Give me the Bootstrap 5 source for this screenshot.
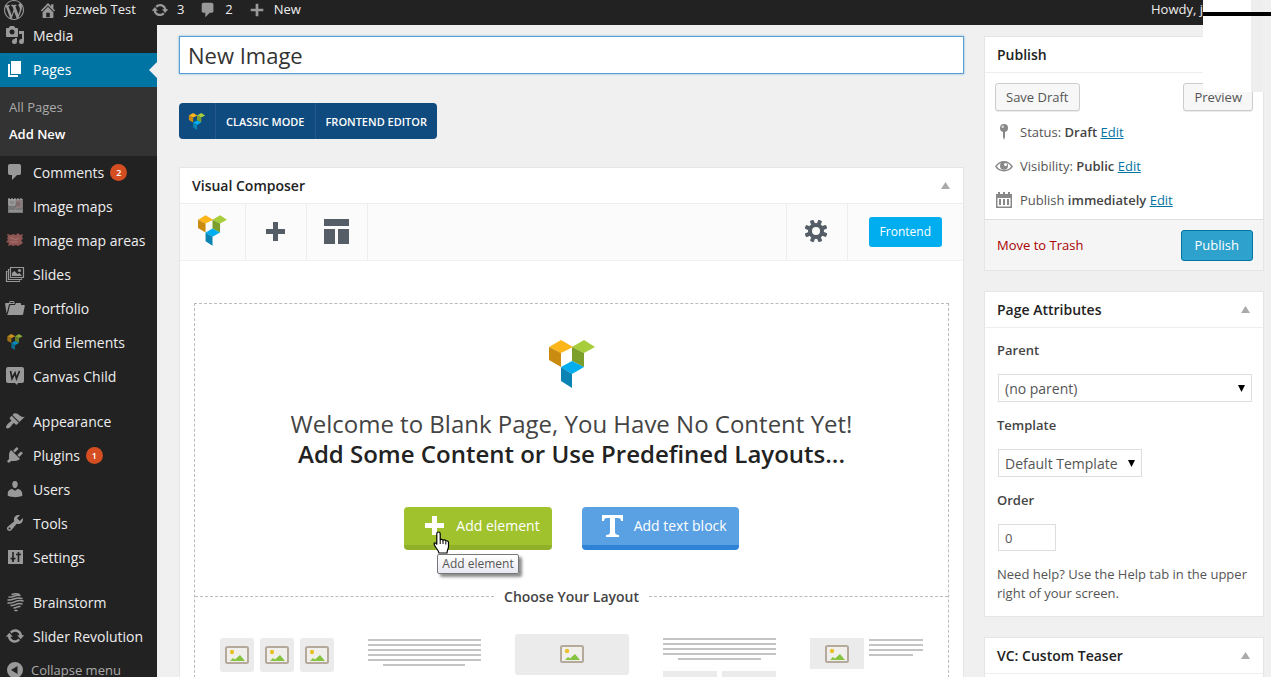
<!DOCTYPE html>
<html lang="en">
<head>
<meta charset="utf-8">
<meta name="viewport" content="width=device-width, initial-scale=1">
<title>Add New Page</title>
<link rel="stylesheet" href="https://cdn.jsdelivr.net/npm/bootstrap@5.3.0/dist/css/bootstrap.min.css">
<style>
body{font-family:"Open Sans",sans-serif;font-size:13px;line-height:19px;color:#555;background:#f0f0f0}
svg{display:block;flex:none}
a{color:#0074a2}
.ico{width:20px;height:20px;fill:#999}
/* top bar */
.adminbar{height:25px;background:#222;color:#eee;padding:0 20px 6px 4px}
.adminbar a{color:#eee}
.adminbar .ico{width:18px;height:18px}
.adminbar .wp{width:20px;height:20px}
.adminbar .entry{padding-left:15px;gap:8px}
/* side menu */
.sidemenu{width:157px;background:#222;font-size:14px}
.sidemenu .nav-link{color:#eee;height:34px;padding:0 0 2px 5px;gap:8px;white-space:nowrap}
.sidemenu .first-item{height:28px;padding-bottom:8px}
.sidemenu .current{background:#0074a2;color:#fff;position:relative}
.sidemenu .current .ico{fill:#fff}
.sidemenu .current::after{content:"";position:absolute;right:0;top:9px;border:8px solid transparent;border-right-color:#f0f0f0;border-left:0}
.submenu{background:#333;padding:7px 0 8px 9px;font-size:13px;line-height:27px}
.submenu a{color:#aaa}
.submenu a.here{color:#fff;font-weight:600}
.split{margin-bottom:11px}
.count{width:17px;height:17px;border-radius:50%;background:#d54e21;color:#fff;font-size:9px;font-weight:600;line-height:17px;text-align:center;margin-left:-2px}
.sidemenu .collapse-btn{color:#aaa;gap:6px;font-size:13px}
/* panels */
.workarea{padding:11px 7px 0 22px;gap:20px}
.aside-col{width:280px}
.panel{background:#fff;border:1px solid #e5e5e5}
.panel-head{height:36px;padding:0 12px;border-bottom:1px solid #eee;color:#222}
.panel-head h2{font-size:14px;font-weight:600;line-height:19px;margin:0}
.tri{width:9px;height:7px;fill:#aaa}
.panel-head button{border:0;background:none;padding:0 1px}
.title-box{height:38px;border:1px solid #5b9dd9;border-radius:0;padding:0 8px;font-size:22px;color:#333;box-shadow:0 0 2px rgba(30,140,190,.6)}
.switcher{margin:29px 0 28px;height:36px;background:#0f4b7e;border-radius:4px;font-size:11px}
.switcher button{border:0;border-left:1px solid #23598a;background:none;color:#fff;padding:0 10px;height:36px;font-weight:600}
.toolbar{height:57px;background:#fbfbfb;border-bottom:1px solid #f0f0f0}
.toolbar .tool{width:61px;height:56px;border:0;border-right:1px solid #eee;background:none;padding:0 2px 2px 0}
.toolbar .tool-logo{width:66px;padding:0 0 4px}
.toolbar .tool-gear{width:62px;border-left:1px solid #eee}
.btn-front{background:#00aef0;color:#fff;font-size:12px;line-height:18px;padding:6px 11px;border:0;border-radius:3px;margin:0 21px}
.canvas{margin:42px 14px 0;border:1px dashed #bbb;border-bottom:0;padding-top:36px;height:380px}
.welcome{font-size:24px;line-height:30px;margin:21px 0 0;text-align:center;color:#444}
.welcome strong{color:#222;font-weight:600;font-size:24px}
.cta{gap:30px;margin-top:38px}
.btn-cta{height:43px;color:#fff;font-size:14px;border:0;border-bottom:5px solid;border-radius:4px;padding:0 12px 1px 20px;gap:11px}
.btn-cta:hover{color:#fff}
.green{background:#9fc22d;border-color:#90b02a}
.blue{background:#5aa1e4;border-color:#2f83d6}
.tip{position:absolute;left:33px;top:47px;white-space:nowrap;background:linear-gradient(#fff,#e8e8f2);border:1px solid #777;border-radius:2px;color:#555;font-size:12px;line-height:18px;padding:0 4px;box-shadow:3px 3px 3px rgba(0,0,0,.45)}
.pointer{position:absolute;left:29px;top:24px;z-index:2}
.choose{margin-top:37px;font-size:14px;color:#444;gap:10px;font-weight:600}
.choose span{flex:1;border-top:1px dashed #bbb}
.layouts{padding:28px 24px 0 25px}
.layouts a{display:block}
/* right column */
.btn-wp{height:28px;border:1px solid #ccc;background:#f7f7f7;color:#555;font-size:13px;line-height:26px;padding:0 10px;border-radius:3px;box-shadow:0 1px 0 rgba(0,0,0,.08)}
.btn-publish{height:31px;background:#2ea2cc;border:1px solid #0074a2;color:#fff;font-size:13px;line-height:28px;padding:0 13px;border-radius:3px}
.misc{height:34px;gap:6px;padding-left:9px}
.misc strong,.attr label{font-weight:600;color:#444}
.misc .ico{fill:#888}
.minor{padding:10px 10px 4px}
.foot{background:#f5f5f5;border-top:1px solid #ddd;height:51px;margin-top:2px;padding:0 10px 0 12px}
.foot a{color:#a00}
.attr{padding:13px 11px 13px 12px}
.attr label{display:block;margin-bottom:14px}
.attr .field{border:1px solid #ddd;border-radius:0;height:28px;font-size:14px;line-height:19px;color:#555;padding:0 6px;margin:0 0 14px 1px;width:auto}
.attr .form-select{background:#fff url("data:image/svg+xml,%3Csvg xmlns='http://www.w3.org/2000/svg' width='7' height='7'%3E%3Cpath d='M0 0h7L3.500 7z'/%3E%3C/svg%3E") no-repeat right 6px top 10px}
.attr .wide{width:calc(100% - 1px)}
.attr .tmpl{width:144px}
.attr .num{width:58px;height:27px;font-size:13px}
/* window lying over the corner of the page */
.cover{position:absolute;top:0;right:0;width:68px;height:92px;z-index:5}
.cover .white{width:48px;background:#fff}
.cover .grey{width:12px;background:#eee}
.cover .grey2{width:8px;background:#f0f0f0}
.cover .bar{position:absolute;left:0;right:0;top:12px;height:4px;background:#000}
</style>
</head>
<body class="vh-100 overflow-hidden d-flex flex-column position-relative">
<svg width="0" height="0" class="position-absolute" aria-hidden="true">
<symbol id="wp" viewBox="0 0 20 20"><path d="M20 10C20 4.490 15.510 0 10 0C4.480 0 0 4.490 0 10C0 15.520 4.480 20 10 20C15.510 20 20 15.520 20 10ZM7.780 15.370L4.370 6.220C4.920 6.200 5.540 6.130 5.540 6.130C6.040 6.070 5.980 5 5.480 5.020C5.480 5.020 4.030 5.130 3.110 5.130C2.930 5.130 2.740 5.130 2.530 5.120C4.120 2.690 6.870 1.110 10 1.110C12.330 1.110 14.450 1.980 16.050 3.450C15.370 3.340 14.400 3.840 14.400 5.020C14.400 5.760 14.850 6.380 15.300 7.120C15.650 7.740 15.860 8.500 15.860 9.620C15.860 11.130 14.440 14.690 14.440 14.690L11.380 6.220C11.930 6.200 12.220 6.050 12.220 6.050C12.720 6 12.660 4.800 12.160 4.830C12.160 4.830 10.720 4.950 9.780 4.950C8.910 4.950 7.460 4.830 7.460 4.830C6.960 4.800 6.900 6.030 7.400 6.050L8.320 6.130L9.580 9.540ZM17.410 10C17.650 9.360 18.150 8.130 17.840 5.750C18.540 7.040 18.890 8.460 18.890 10C18.890 13.290 17.160 16.240 14.490 17.780C15.460 15.190 16.430 12.580 17.410 10ZM6.100 18.090C3.120 16.650 1.110 13.530 1.110 10C1.110 8.700 1.340 7.520 1.830 6.410C3.250 10.300 4.670 14.200 6.100 18.090ZM10.130 11.460L12.710 18.440C11.850 18.730 10.950 18.890 10 18.890C9.210 18.890 8.430 18.780 7.710 18.560C8.520 16.180 9.330 13.820 10.130 11.460Z"/></symbol>
<symbol id="home" viewBox="0 0 20 20"><path fill-rule="evenodd" d="M16 8.500l2 2-1.300 1.200L10 5l-6.700 6.700L2 10.500 10 2.300l3.500 3.500V3.500H16zM10 6.500l6 6V19H4v-6.500zM12 18v-5H8v5z"/></symbol>
<symbol id="sync" viewBox="0 0 20 20"><path d="M10.200 3.280c3.530 0 6.430 2.610 6.920 6h2.080l-3.500 4-3.500-4h2.320c-.45-1.970-2.210-3.450-4.320-3.450-1.450 0-2.730.71-3.540 1.780L4.950 5.660C6.230 4.200 8.110 3.280 10.200 3.280zm-.4 13.440c-3.520 0-6.430-2.610-6.920-6H.8l3.500-4 3.500 4H5.480c.45 1.970 2.210 3.450 4.320 3.450 1.450 0 2.730-.71 3.540-1.780l1.710 1.950c-1.280 1.460-3.150 2.380-5.250 2.380z"/></symbol>
<symbol id="bubble" viewBox="0 0 20 20"><path d="M5 2h9q.82 0 1.410.59T16 4v7q0 .82-.59 1.410T14 13h-2l-5 5v-5H5q-.82 0-1.410-.59T3 11V4q0-.82.59-1.410T5 2z"/></symbol>
<symbol id="plus" viewBox="0 0 20 20"><path d="M8.500 3h3v5.500H17v3h-5.500V17h-3v-5.500H3v-3h5.500z"/></symbol>
<symbol id="media" viewBox="0 0 20 20"><path fill-rule="evenodd" d="M13 11V4c0-.55-.45-1-1-1h-1.670L9 1H5L3.670 3H2c-.55 0-1 .45-1 1v7c0 .55.45 1 1 1h10c.55 0 1-.45 1-1zM7 4.500a2.500 2.500 0 1 1 0 5 2.500 2.500 0 0 1 0-5zM14 6h5v10.500a2.500 2.500 0 1 1-2-2.450V9h-3zM10 14.050V13h2v3.500a2.500 2.500 0 1 1-2-2.450z"/></symbol>
<symbol id="pages" viewBox="0 0 20 20"><path d="M6 15V2h10v13zM5 16h8v2H3V5h2z"/></symbol>
<symbol id="imap" viewBox="0 0 20 20"><path d="M3 3h15v14H3z" fill="#777"/><path d="M4 4h6v5H4zM4 15h13" stroke="#aaa" fill="#898989"/><path d="M11 5h5v6h-4l-2 3" stroke="#a08585" fill="#7d6c6c"/><path d="M3 3h14" stroke="#bbb" stroke-dasharray="2 1"/></symbol>
<symbol id="iarea" viewBox="0 0 20 20"><path fill="#8e5553" d="M2 4l4 1 2-1 3 1 2-2 2 2 3-1-1 3 1 2-2 1 2 3-3 2-2 1-2-1-3 1-2-1-3 1 1-3-3-1 2-2-1-2 1-1z"/><path d="M5 8h3l2 2 4-2M6 12h7" stroke="#a87673" fill="none"/></symbol>
<symbol id="slides" viewBox="0 0 20 20"><g fill="none" stroke="#999" stroke-width="1.200"><path d="M5.500 3.500h13v10h-13zM4.500 5.500h-1v10h13v-1M2.500 7.500h-1v10h13v-1"/></g><path d="M7 12V9l2.500-2 3 3 2-1 2.500 3z"/><circle cx="14.500" cy="6.500" r="1.600"/></symbol>
<symbol id="folio" viewBox="0 0 20 20"><path d="M4 5H.78c-.37 0-.74.32-.69.84l1.560 9.990S3.500 8.470 3.860 6.700c.11-.53.61-.7.98-.7H10s-.7-2.080-.77-2.310C9.110 3.250 8.890 3 8.450 3H5.140c-.36 0-.7.23-.8.640C4.250 4.040 4 5 4 5zm4.880 0h-4s.42-1 .87-1h2.130c.48 0 1 1 1 1zM2.670 16.250c-.31.470-.76.750-1.260.750h15.730c.54 0 .92-.31 1.030-.83.440-2.190 1.680-8.440 1.680-8.440.07-.5-.3-.73-.62-.73H16V5.530c0-.16-.26-.53-.66-.53h-3.760c-.52 0-.87.58-.87.58L10 7H5.590c-.32 0-.63.19-.69.5 0 0-1.590 6.700-1.720 7.330-.07.370-.22.990-.51 1.420z"/></symbol>
<symbol id="vc" viewBox="0 0 46 48"><path fill="#fcb61a" d="M0 7L12 0l12 7-12 6z"/><path fill="#c98c10" d="M0 7l12 6v14L0 20z"/><path fill="#a8cd3c" d="M23 7l12-7 11 7-11 6z"/><path fill="#7c9f2b" d="M23 7l12 6v14l-12-6z"/><path fill="#00aeef" d="M12 27l11-6 12 6-12 7z"/><path fill="#0b84b4" d="M12 27l11 7v14l-11-7z"/></symbol>
<symbol id="woo" viewBox="0 0 20 20"><path d="M3 1h14a2 2 0 0 1 2 2v12a2 2 0 0 1-2 2h-4l-1 2-2-2H3a2 2 0 0 1-2-2V3a2 2 0 0 1 2-2z"/><path d="M5.500 5l1.500 7.500 3-5.500 1.500 5.500L14.500 5" fill="none" stroke="#222" stroke-width="1.700"/></symbol>
<symbol id="brush" viewBox="0 0 20 20"><path d="M14.480 11.060L7.410 3.990l1.500-1.500c.5-.56 2.300-.47 3.510.32 1.210.8 1.430 1.280 2.910 2.100 1.180.64 2.450 1.260 4.450.85zm-.71.71L6.700 4.700 4.930 6.470c-.39.39-.39 1.020 0 1.410l1.060 1.060c.39.39.39 1.030 0 1.420-.6.6-1.430 1.110-2.210 1.690-.35.260-.7.530-1.010.84C1.430 14.230.4 16.080 1.400 17.070c.99 1 2.840-.03 4.180-1.360.31-.31.580-.66.850-1.020.57-.78 1.080-1.610 1.690-2.210.39-.39 1.020-.39 1.410 0l1.060 1.060c.39.39 1.020.39 1.410 0z"/></symbol>
<symbol id="plug" viewBox="0 0 20 20"><path d="M13.110 4.360L9.870 7.600 8 5.730l3.240-3.240c.35-.34 1.050-.2 1.560.32.52.51.66 1.210.31 1.550zm-8 1.770l.91-1.120 9.010 9.010-1.190.84c-.71.71-2.630 1.160-3.820 1.160H6.140L4.900 17.260c-.59.59-1.540.59-2.120 0-.59-.58-.59-1.530 0-2.120l1.240-1.240v-3.880c0-1.130.4-3.190 1.090-3.890zm7.260 3.970l3.240-3.240c.34-.35 1.040-.21 1.550.31.52.51.66 1.210.31 1.550l-3.240 3.250z"/></symbol>
<symbol id="user" viewBox="0 0 20 20"><path d="M10 9.250c-2.270 0-2.730-3.440-2.730-3.440C7 4.020 7.820 2 9.970 2c2.160 0 2.980 2.020 2.710 3.810 0 0-.41 3.440-2.680 3.440zm0 2.570L12.720 10c2.390 0 4.520 2.330 4.520 4.530v2.490s-3.650 1.130-7.240 1.130c-3.650 0-7.240-1.130-7.240-1.130v-2.490c0-2.250 1.940-4.480 4.470-4.480z"/></symbol>
<symbol id="wrench" viewBox="0 0 20 20"><path fill-rule="evenodd" d="M16.680 9.770c-1.340 1.340-3.300 1.670-4.950.99l-5.410 6.520c-.99.99-2.590.99-3.580 0s-.99-2.590 0-3.570l6.520-5.420c-.68-1.650-.35-3.610.99-4.950 1.280-1.280 3.120-1.620 4.720-1.060l-2.890 2.890 2.820 2.820 2.860-2.870c.53 1.580.18 3.390-1.080 4.650zM3.810 16.210c.4.390 1.040.39 1.430 0 .4-.4.4-1.040 0-1.430-.39-.4-1.030-.4-1.430 0-.39.390-.39 1.030 0 1.430z"/></symbol>
<symbol id="sliders" viewBox="0 0 20 20"><path d="M3 3h15v14H3z"/><path d="M8 5v10M13.500 5v10M5.500 11.500h5M11 7.500h5" stroke="#222" stroke-width="1.600"/><path d="M6.500 12L8 15l1.500-3z" fill="#222"/></symbol>
<symbol id="storm" viewBox="0 0 20 20"><g fill="none" stroke="#999" stroke-width="1.500" stroke-linecap="round"><path d="M4 5c4 1 6-3 11-1.500M3 8c5 1 8-4 14-1.500M3 11c6 1 8-4 15-2M6 13.500c5 .5 6-3.500 11-1.500M9 16c3 0 3-2 6-1.500M10 18.500h2M7 2.500c3-1.200 5-1 7-.2"/></g></symbol>
<symbol id="back" viewBox="0 0 20 20"><path fill-rule="evenodd" d="M10 2a8 8 0 1 1 0 16 8 8 0 0 1 0-16zm2.500 4L6 10l6.500 4z"/></symbol>
<symbol id="pin" viewBox="0 0 20 20"><circle cx="10" cy="6" r="4"/><path d="M9 9h2v6l-1 3-1-3z"/><circle cx="8.700" cy="4.800" r="1.200" fill="#ddd"/></symbol>
<symbol id="eye" viewBox="0 0 20 20"><path fill-rule="evenodd" d="M1 10.500C5 3 15 3 19 10.500 15 17 5 17 1 10.500zm1.800 0c3.200 4.800 11.200 4.800 14.400 0-3.200-5.500-11.200-5.500-14.400 0z"/><circle cx="10" cy="9.800" r="4"/><circle cx="11.500" cy="8.500" r="1.500" fill="#fff"/></symbol>
<symbol id="cal" viewBox="0 0 20 20"><path fill-rule="evenodd" d="M2 4h16v14H2zm1.500 4v8.500h13V8z"/><path d="M5 9h2v6H5zM9 9h2v6H9zM13 9h2v6h-2zM4 2h2v3H4zM9 2h2v3H9zM14 2h2v3h-2z"/></symbol>
<symbol id="tri" viewBox="0 0 9 7"><path d="M4.500 0L9 7H0z"/></symbol>
<symbol id="pic" viewBox="0 0 24 18"><rect x="1" y="1" width="22" height="16" rx="1.500" fill="#f1efec" stroke="#b4a99b" stroke-width="2"/><path fill="#86c440" d="M5 15l3-3 2 1.500L15 9l5 6z"/><circle cx="7" cy="6" r="2.200" fill="#e8c02c"/></symbol>
</svg>

<header class="adminbar d-flex align-items-center justify-content-between">
  <nav class="d-flex align-items-center">
    <a href="#" aria-label="WordPress"><svg class="ico wp"><use href="#wp"/></svg></a>
    <a href="#" class="entry d-flex align-items-center text-decoration-none"><svg class="ico"><use href="#home"/></svg>Jezweb Test</a>
    <a href="#" class="entry d-flex align-items-center text-decoration-none"><svg class="ico"><use href="#sync"/></svg>3</a>
    <a href="#" class="entry d-flex align-items-center text-decoration-none"><svg class="ico"><use href="#bubble"/></svg>2</a>
    <a href="#" class="entry d-flex align-items-center text-decoration-none"><svg class="ico"><use href="#plus"/></svg>New</a>
  </nav>
  <a href="#" class="text-decoration-none me-5">Howdy, j</a>
</header>

<div class="d-flex flex-fill">
  <nav class="sidemenu flex-shrink-0" aria-label="Main menu">
    <a href="#" class="nav-link first-item d-flex align-items-center"><svg class="ico"><use href="#media"/></svg>Media</a>
    <a href="#" class="nav-link current d-flex align-items-center"><svg class="ico"><use href="#pages"/></svg>Pages</a>
    <div class="submenu d-flex flex-column">
      <a href="#" class="text-decoration-none">All Pages</a>
      <a href="#" class="text-decoration-none here">Add New</a>
    </div>
    <a href="#" class="nav-link d-flex align-items-center"><svg class="ico"><use href="#bubble"/></svg>Comments <span class="count">2</span></a>
    <a href="#" class="nav-link d-flex align-items-center"><svg class="ico"><use href="#imap"/></svg>Image maps</a>
    <a href="#" class="nav-link d-flex align-items-center"><svg class="ico"><use href="#iarea"/></svg>Image map areas</a>
    <a href="#" class="nav-link d-flex align-items-center"><svg class="ico"><use href="#slides"/></svg>Slides</a>
    <a href="#" class="nav-link d-flex align-items-center"><svg class="ico"><use href="#folio"/></svg>Portfolio</a>
    <a href="#" class="nav-link d-flex align-items-center"><svg class="ico opacity-75" viewBox="0 0 20 20"><use href="#vc" x="2" y="2" width="16" height="16"/></svg>Grid Elements</a>
    <a href="#" class="nav-link d-flex align-items-center split"><svg class="ico"><use href="#woo"/></svg>Canvas Child</a>
    <a href="#" class="nav-link d-flex align-items-center"><svg class="ico"><use href="#brush"/></svg>Appearance</a>
    <a href="#" class="nav-link d-flex align-items-center"><svg class="ico"><use href="#plug"/></svg>Plugins <span class="count">1</span></a>
    <a href="#" class="nav-link d-flex align-items-center"><svg class="ico"><use href="#user"/></svg>Users</a>
    <a href="#" class="nav-link d-flex align-items-center"><svg class="ico"><use href="#wrench"/></svg>Tools</a>
    <a href="#" class="nav-link d-flex align-items-center split"><svg class="ico"><use href="#sliders"/></svg>Settings</a>
    <a href="#" class="nav-link d-flex align-items-center"><svg class="ico"><use href="#storm"/></svg>Brainstorm</a>
    <a href="#" class="nav-link d-flex align-items-center"><svg class="ico"><use href="#sync"/></svg>Slider Revolution</a>
    <button type="button" class="nav-link d-flex align-items-center border-0 bg-transparent collapse-btn"><svg class="ico"><use href="#back"/></svg>Collapse menu</button>
  </nav>

  <main class="workarea d-flex flex-fill align-items-start">
    <div class="flex-fill">
      <input type="text" class="form-control title-box" aria-label="Page title" value="New Image">
      <div class="switcher d-inline-flex align-items-center">
        <a href="#" class="px-2" aria-label="Visual Composer"><svg width="20" height="17"><use href="#vc"/></svg></a>
        <button type="button">CLASSIC MODE</button>
        <button type="button">FRONTEND EDITOR</button>
      </div>

      <section class="panel">
        <div class="panel-head d-flex align-items-center justify-content-between"><h2>Visual Composer</h2><button type="button" aria-label="Toggle"><svg class="tri"><use href="#tri"/></svg></button></div>
        <div class="toolbar d-flex align-items-center">
          <button type="button" class="tool tool-logo d-flex align-items-center justify-content-center" aria-label="Visual Composer"><svg width="29" height="31"><use href="#vc"/></svg></button>
          <button type="button" class="tool d-flex align-items-center justify-content-center" aria-label="Add"><svg width="19" height="19" fill="#555d66"><path d="M7 0h5v7h7v5h-7v7H7v-7H0V7h7z"/></svg></button>
          <button type="button" class="tool d-flex align-items-center justify-content-center" aria-label="Templates"><svg width="25" height="25" fill="#555d66"><path d="M0 0h25v7H0zM0 10h11v15H0zM14 10h11v15H14z"/></svg></button>
          <button type="button" class="tool tool-gear ms-auto d-flex align-items-center justify-content-center" aria-label="Settings"><svg width="24" height="24" viewBox="-12 -12 24 24"><g fill="#555d66"><circle r="8"/><rect x="-2" y="-11.500" width="4" height="23" rx="1" transform="rotate(22)"/><rect x="-2" y="-11.500" width="4" height="23" rx="1" transform="rotate(67)"/><rect x="-2" y="-11.500" width="4" height="23" rx="1" transform="rotate(112)"/><rect x="-2" y="-11.500" width="4" height="23" rx="1" transform="rotate(157)"/></g><circle r="4" fill="#fbfbfb"/></svg></button>
          <button type="button" class="btn btn-front">Frontend</button>
        </div>
        <div class="canvas">
          <svg class="mx-auto" width="46" height="48"><use href="#vc"/></svg>
          <p class="welcome">Welcome to Blank Page, You Have No Content Yet!<br><strong>Add Some Content or Use Predefined Layouts...</strong></p>
          <div class="cta d-flex justify-content-center">
            <div class="position-relative">
              <button type="button" class="btn btn-cta green d-flex align-items-center"><svg width="21" height="19" fill="#fff"><path d="M8 0h5v7h7v5h-7v7H8v-7H1V7h7z"/></svg>Add element</button>
              <svg class="pointer" width="18" height="23" viewBox="0 0 18 23"><path d="M5.500 1c1.200 0 1.700.8 1.700 1.800V9c.3-1 2.500-1 2.800.4.800-.9 2.500-.6 2.800.7 1-.7 2.700-.1 2.700 1.400v4c0 2.500-1.500 3.500-1.500 6.500H6c0-2.500-4-5.500-4.800-8.700-.5-1.800 1.300-2.300 2.600.2V2.800C3.800 1.800 4.300 1 5.500 1z" fill="#fff" stroke="#000" stroke-width="1.200"/><path d="M7.200 9v4M10 10v3M12.800 11v2.500" stroke="#000"/></svg>
              <div class="tip" role="tooltip">Add element</div>
            </div>
            <button type="button" class="btn btn-cta blue d-flex align-items-center"><svg width="21" height="22" fill="#fff"><path d="M0 0h21v6h-2c0-2-1-3-3-3h-3v14c0 2 1 3 4 3v2H4v-2c3 0 4-1 4-3V3H5C3 3 2 4 2 6H0z"/></svg>Add text block</button>
          </div>
          <div class="choose d-flex align-items-center"><span></span>Choose Your Layout<span></span></div>
          <div class="layouts d-flex justify-content-between">
            <a href="#" aria-label="Three images"><svg width="114" height="44"><g fill="#ebebeb"><rect y="4" width="34" height="34" rx="3"/><rect x="40" y="4" width="34" height="34" rx="3"/><rect x="80" y="4" width="34" height="34" rx="3"/></g><use href="#pic" x="5" y="12" width="24" height="18"/><use href="#pic" x="45" y="12" width="24" height="18"/><use href="#pic" x="85" y="12" width="24" height="18"/></svg></a>
            <a href="#" aria-label="Text"><svg width="114" height="44"><path d="M0 6h113M0 11h113M0 16h113M0 21h113M0 26h113M15 31h82" stroke="#c4c4c4" stroke-width="2"/></svg></a>
            <a href="#" aria-label="One image"><svg width="114" height="44"><rect width="114" height="41" rx="3" fill="#ebebeb"/><use href="#pic" x="45" y="11" width="24" height="18"/></svg></a>
            <a href="#" aria-label="Text and two columns"><svg width="114" height="44"><path d="M0 5h113M0 10h113M0 15h113M0 20h113M15 25h83" stroke="#c4c4c4" stroke-width="2"/><path d="M0 37h54v7H0zM59 37h54v7H59z" fill="#ebebeb"/></svg></a>
            <a href="#" aria-label="Image and text"><svg width="114" height="44"><path d="M0 4h54v31H0z" fill="#ebebeb"/><use href="#pic" x="15" y="11" width="24" height="18"/><path d="M59 6h54M59 11h54M59 16h54M59 21h44" stroke="#c4c4c4" stroke-width="2"/></svg></a>
          </div>
        </div>
      </section>
    </div>

    <aside class="aside-col flex-shrink-0 d-flex flex-column">
      <section class="panel mb-3">
        <div class="panel-head d-flex align-items-center"><h2>Publish</h2></div>
        <div class="minor d-flex justify-content-between"><button type="button" class="btn btn-wp">Save Draft</button><button type="button" class="btn btn-wp">Preview</button></div>
        <div class="misc d-flex align-items-center"><svg class="ico"><use href="#pin"/></svg><span>Status: <strong>Draft</strong> <a href="#">Edit</a></span></div>
        <div class="misc d-flex align-items-center"><svg class="ico"><use href="#eye"/></svg><span>Visibility: <strong>Public</strong> <a href="#">Edit</a></span></div>
        <div class="misc d-flex align-items-center"><svg class="ico"><use href="#cal"/></svg><span>Publish <strong>immediately</strong> <a href="#">Edit</a></span></div>
        <div class="foot d-flex align-items-center justify-content-between"><a href="#" class="text-decoration-none">Move to Trash</a><button type="button" class="btn btn-publish">Publish</button></div>
      </section>
      <section class="panel mt-1 mb-3">
        <div class="panel-head d-flex align-items-center justify-content-between"><h2>Page Attributes</h2><button type="button" aria-label="Toggle"><svg class="tri"><use href="#tri"/></svg></button></div>
        <div class="attr">
          <label for="parent">Parent</label>
          <select id="parent" class="form-select field wide"><option>(no parent)</option></select>
          <label for="template">Template</label>
          <select id="template" class="form-select field tmpl"><option>Default Template</option></select>
          <label for="order">Order</label>
          <input id="order" type="text" class="form-control field num" value="0">
          <div>Need help? Use the Help tab in the upper right of your screen.</div>
        </div>
      </section>
      <section class="panel mt-1">
        <div class="panel-head d-flex align-items-center justify-content-between"><h2>VC: Custom Teaser</h2><button type="button" aria-label="Toggle"><svg class="tri"><use href="#tri"/></svg></button></div>
        <div class="attr"></div>
      </section>
    </aside>
  </main>
</div>

<div class="cover d-flex" aria-hidden="true"><div class="white"></div><div class="grey"></div><div class="grey2"></div><div class="bar"></div></div>
<script src="https://cdn.jsdelivr.net/npm/bootstrap@5.3.0/dist/js/bootstrap.bundle.min.js"></script>
</body>
</html>
